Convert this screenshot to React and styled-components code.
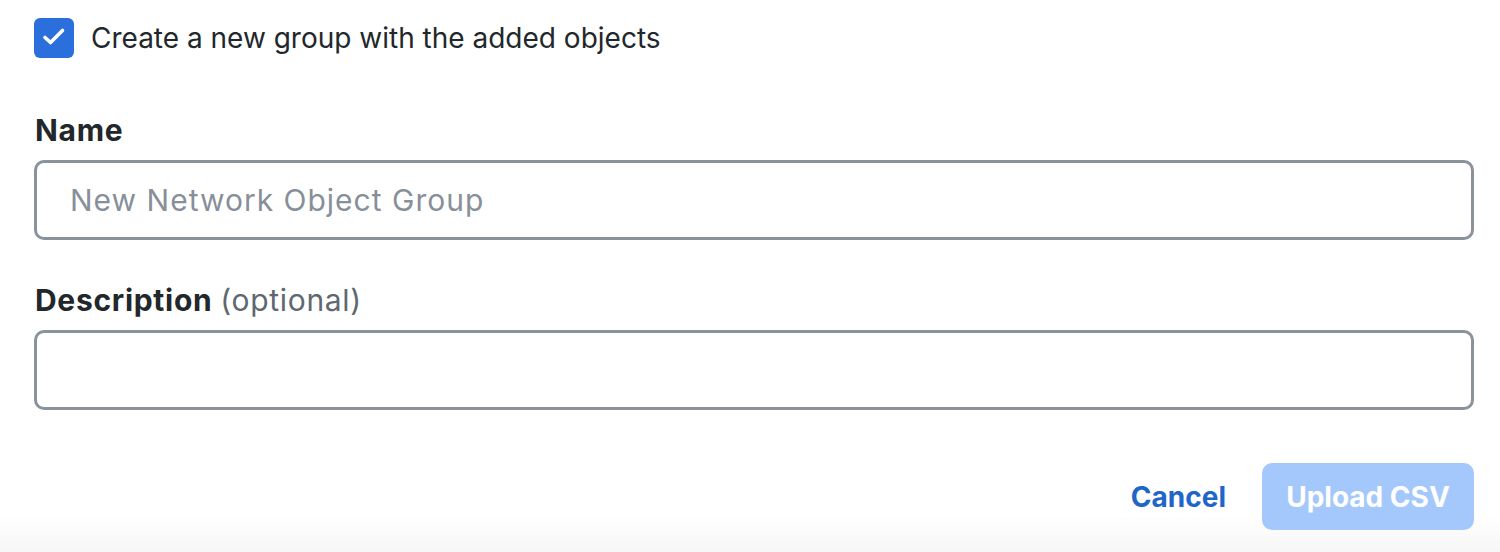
import React, { useState } from "react";
import styled, { createGlobalStyle } from "styled-components";

const GlobalStyle = createGlobalStyle`
  html, body {
    margin: 0;
    padding: 0;
    background: #fff;
  }
  body {
    font-family: Inter, "Noto Sans", sans-serif;
    color: #22272b;
  }
  * {
    box-sizing: border-box;
  }
`;

const Page = styled.div`
  width: 1500px;
  height: 552px;
  padding: 18px 26px 0 34px;
  background: linear-gradient(
    to bottom,
    #ffffff 0px,
    #ffffff 515px,
    #f6f6f6 552px
  );
  display: flex;
  flex-direction: column;
`;

const CheckRow = styled.label`
  display: flex;
  align-items: center;
  gap: 17px;
  cursor: pointer;
  font-size: 28px;
  line-height: 40px;
  color: #22272b;
`;

const Box = styled.span`
  width: 40px;
  height: 40px;
  border-radius: 6px;
  background: ${(p) => (p.checked ? "#2a6fdb" : "#fff")};
  border: ${(p) => (p.checked ? "none" : "3px solid #8a939c")};
  display: flex;
  flex-shrink: 0;
`;

const Field = styled.div`
  display: flex;
  flex-direction: column;
  margin-top: ${(p) => p.top}px;
`;

const Label = styled.div`
  font-size: 30px;
  font-weight: 700;
  letter-spacing: 0.7px;
  line-height: 36px;
  color: #22272b;
  margin-bottom: 12px;
  padding-left: 1px;
`;

const Optional = styled.span`
  font-weight: 400;
  color: #5f6770;
`;

const Input = styled.input`
  width: 1440px;
  height: 80px;
  border: 3px solid #8a939c;
  border-radius: 10px;
  padding: 0 33px;
  font-family: Inter, "Noto Sans", sans-serif;
  font-size: 30px;
  letter-spacing: 1px;
  color: #22272b;
  outline: none;
  background: #fff;

  &::placeholder {
    color: #878f99;
  }
`;

const Footer = styled.div`
  width: 1440px;
  display: flex;
  justify-content: flex-end;
  align-items: center;
  gap: 36px;
  margin-top: 53px;
`;

const LinkButton = styled.button`
  background: none;
  border: none;
  padding: 0;
  font-family: Inter, "Noto Sans", sans-serif;
  font-size: 28px;
  font-weight: 700;
  color: #1f66c9;
  cursor: pointer;
`;

const PrimaryButton = styled.button`
  width: 212px;
  height: 67px;
  border: none;
  border-radius: 10px;
  background: ${(p) => (p.disabled ? "#a5c8fc" : "#2a6fdb")};
  color: #fff;
  font-family: Inter, "Noto Sans", sans-serif;
  font-size: 28px;
  font-weight: 700;
`;

export default function App() {
  const [checked, setChecked] = useState(true);

  return (
    <>
      <GlobalStyle />
      <Page>
        <CheckRow onClick={() => setChecked(!checked)}>
          <Box checked={checked}>
            {checked && (
              <svg width="40" height="40" viewBox="0 0 40 40" fill="none">
                <path
                  d="M11 19.5 L16.5 24.5 L28.5 12.5"
                  stroke="#fff"
                  strokeWidth="3.6"
                  strokeLinecap="round"
                  strokeLinejoin="round"
                />
              </svg>
            )}
          </Box>
          Create a new group with the added objects
        </CheckRow>

        <Field top={54}>
          <Label>Name</Label>
          <Input placeholder="New Network Object Group" />
        </Field>

        <Field top={42}>
          <Label>
            Description <Optional>(optional)</Optional>
          </Label>
          <Input />
        </Field>

        <Footer>
          <LinkButton>Cancel</LinkButton>
          <PrimaryButton disabled>Upload CSV</PrimaryButton>
        </Footer>
      </Page>
    </>
  );
}
